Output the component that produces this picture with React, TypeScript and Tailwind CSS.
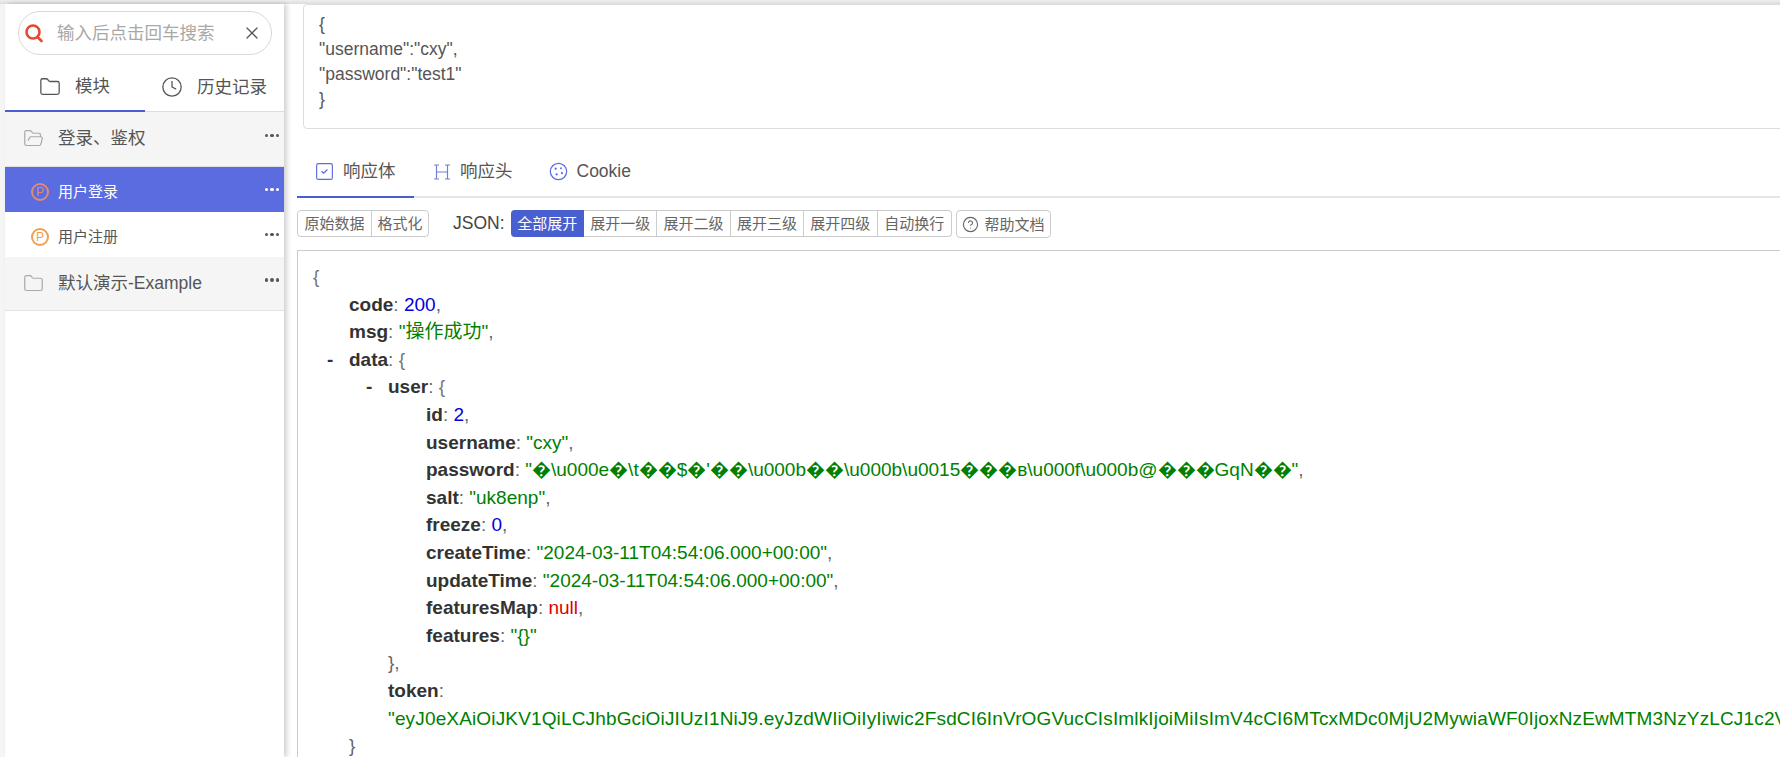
import { ReactNode } from "react";
import { CircleHelp, Clock, Folder, FolderOpen, SquareCheck, X } from "lucide-react";

const FONT = "font-['Liberation_Sans','Noto_Sans_CJK_SC',sans-serif]";

const EXPAND = ["全部展开", "展开一级", "展开二级", "展开三级", "展开四级", "自动换行"];

const TOKEN =
  '"eyJ0eXAiOiJKV1QiLCJhbGciOiJIUzI1NiJ9.eyJzdWIiOiIyIiwic2FsdCI6InVrOGVucCIsImlkIjoiMiIsImV4cCI6MTcxMDc0MjU2MywiaWF0IjoxNzEwMTM3NzYzLCJ1c2V';

function Dots({ light, up }: { light?: boolean; up?: boolean }) {
  return (
    <div className={`flex gap-[2px] mr-[5px] ${up ? "mb-[7px]" : ""}`}>
      {[0, 1, 2].map((i) => (
        <span
          key={i}
          className={`w-[3.5px] h-[3.5px] rounded-full ${light ? "bg-white" : "bg-[#555]"}`}
        />
      ))}
    </div>
  );
}

function PBadge({ dim }: { dim?: boolean }) {
  return (
    <span
      className={`w-[18px] h-[18px] rounded-full border-2 flex items-center justify-center text-[12px] leading-none ${
        dim ? "border-[#e08a70] text-[#e08a70]" : "border-[#f0a050] text-[#f0a050]"
      }`}
    >
      P
    </span>
  );
}

function Key({ children }: { children: ReactNode }) {
  return <span className="font-bold text-[#333]">{children}</span>;
}

function Str({ children }: { children: ReactNode }) {
  return <span className="text-[#008000]">{children}</span>;
}

function Num({ children }: { children: ReactNode }) {
  return <span className="text-[#0000e0]">{children}</span>;
}

function Dash() {
  return <span className="inline-block w-[22px] -ml-[22px] font-bold text-[#333]">-</span>;
}

function Punct({ children }: { children: ReactNode }) {
  return <span className="text-[#777]">{children}</span>;
}

function Sidebar() {
  return (
    <aside className="w-[279px] shrink-0 flex flex-col bg-white shadow-[3px_0_5px_rgba(0,0,0,0.18)] z-10">
      <div className="pt-[7px] pl-[13px] pr-[12px]">
        <div className="h-[44px] rounded-full border border-[#d9d9d9] flex items-center pl-[5px] pr-[9px]">
          <svg viewBox="0 0 20 20" className="w-[20px] h-[20px] shrink-0" fill="none" stroke="#e8492f" strokeWidth="2.6">
            <circle cx="9" cy="9" r="6.5" />
            <path d="M13.5 14l4 4" strokeLinecap="round" />
          </svg>
          <span className="ml-[13px] text-[17.5px] text-[#a8a8a8] whitespace-nowrap">输入后点击回车搜索</span>
          <X className="ml-auto text-[#555] shrink-0" size={20} strokeWidth={1.5} />
        </div>
      </div>
      <div className="h-[57px] flex border-b border-[#ddd] text-[17.5px] text-[#555]">
        <div className="w-[140px] -mb-px border-b-2 border-[#4a5fcf] flex items-center pt-[8px] pl-[34px] gap-[14px]">
          <Folder size={22} strokeWidth={1.4} />
          <span>模块</span>
        </div>
        <div className="flex items-center pt-[8px] pl-[16px] gap-[14px]">
          <Clock size={22} strokeWidth={1.4} />
          <span>历史记录</span>
        </div>
      </div>
      <div className="h-[55px] bg-[#f5f5f5] border-b border-[#e2e2e2] flex items-center justify-between pl-[18px] text-[17.5px] text-[#555]">
        <div className="flex items-center gap-[14px] mb-[2px]">
          <FolderOpen className="text-[#aaa]" size={21} strokeWidth={1.4} />
          <span>登录、鉴权</span>
        </div>
        <Dots up />
      </div>
      <div className="h-[45px] bg-[#5a6cdf] flex items-center justify-between pl-[26px] text-[15px] text-white">
        <div className="flex items-center gap-[9px] pt-[5px]">
          <PBadge dim />
          <span>用户登录</span>
        </div>
        <Dots light />
      </div>
      <div className="h-[45px] flex items-center justify-between pl-[26px] text-[15px] text-[#555]">
        <div className="flex items-center gap-[9px] pt-[5px]">
          <PBadge />
          <span>用户注册</span>
        </div>
        <Dots />
      </div>
      <div className="h-[54px] bg-[#f5f5f5] border-b border-[#e2e2e2] flex items-center justify-between pl-[18px] text-[17.5px] text-[#555]">
        <div className="flex items-center gap-[14px]">
          <Folder className="text-[#aaa]" size={21} strokeWidth={1.4} />
          <span>默认演示-Example</span>
        </div>
        <Dots up />
      </div>
    </aside>
  );
}

function Tabs() {
  return (
    <div className="mt-[18px] h-[51px] border-b-2 border-[#e6e6e6] flex text-[17.5px] text-[#555]">
      <div className="w-[117px] h-[51px] border-b-2 border-[#4a5fcf] flex items-center pl-[17px] gap-[8px]">
        <SquareCheck className="text-[#5a6cdf]" size={21} strokeWidth={1.3} />
        <span>响应体</span>
      </div>
      <div className="flex items-center pl-[19px] gap-[9px] h-[49px]">
        <svg viewBox="0 0 18 18" className="w-[18px] h-[18px]" fill="none" stroke="#6f80d8" strokeWidth="1.2">
          <path d="M1 2h5M3.5 2v14M1 16h5M12 2h5M14.5 2v14M12 16h5M3.5 9h11" />
        </svg>
        <span>响应头</span>
      </div>
      <div className="flex items-center pl-[36px] gap-[9px] h-[49px]">
        <svg viewBox="0 0 20 20" className="w-[19px] h-[19px]" fill="none" stroke="#5a6cdf" strokeWidth="1.3">
          <circle cx="10" cy="10" r="8.6" />
          <circle cx="7" cy="7" r="1.2" fill="#5a6cdf" stroke="none" />
          <circle cx="12.6" cy="6.6" r="1" fill="#5a6cdf" stroke="none" />
          <circle cx="13.6" cy="11.6" r="1.2" fill="#5a6cdf" stroke="none" />
          <circle cx="8" cy="13" r="1.2" fill="#5a6cdf" stroke="none" />
        </svg>
        <span>Cookie</span>
      </div>
    </div>
  );
}

function Toolbar() {
  return (
    <div className="mt-[12px] h-[28px] flex items-start text-[15px] text-[#666]">
      <div className="h-[27px] flex border border-[#ccc] rounded-[4px]">
        <span className="w-[74px] flex items-center justify-center pt-[2px] border-r border-[#ccc]">原始数据</span>
        <span className="w-[56px] flex items-center justify-center pt-[2px]">格式化</span>
      </div>
      <span className="ml-[24px] h-[27px] flex items-center text-[17.5px] text-[#444]">JSON:</span>
      <div className="ml-[6px] h-[27px] flex border border-[#ccc] border-l-0 rounded-[4px]">
        {EXPAND.map((label, i) => (
          <span
            key={label}
            className={`w-[73.4px] flex items-center justify-center pt-[2px] ${
              i === 0
                ? "-my-px bg-[#4a5fcf] text-white rounded-l-[4px]"
                : i < EXPAND.length - 1
                  ? "border-r border-[#ccc]"
                  : ""
            }`}
          >
            {label}
          </span>
        ))}
      </div>
      <div className="ml-[4px] w-[95px] h-[28px] border border-[#ccc] rounded-[4px] flex items-center justify-center gap-[5px]">
        <CircleHelp size={17} strokeWidth={1.6} />
        <span className="pt-[2px]">帮助文档</span>
      </div>
    </div>
  );
}

function JsonView() {
  return (
    <div className="mt-[12px] flex-1 border-t border-l border-[#ccc] pt-[12px] pl-[15px] text-[19px] leading-[27.6px] text-[#666] whitespace-nowrap">
      <div className="text-[#777]">{"{"}</div>
      <div className="pl-[36px]">
        <Key>code</Key>: <Num>200</Num>,
      </div>
      <div className="pl-[36px]">
        <Key>msg</Key>: <Str>"操作成功"</Str>,
      </div>
      <div className="pl-[36px]">
        <Dash />
        <Key>data</Key>: <Punct>{"{"}</Punct>
      </div>
      <div className="pl-[75px]">
        <Dash />
        <Key>user</Key>: <Punct>{"{"}</Punct>
      </div>
      <div className="pl-[113px]">
        <Key>id</Key>: <Num>2</Num>,
      </div>
      <div className="pl-[113px]">
        <Key>username</Key>: <Str>"cxy"</Str>,
      </div>
      <div className="pl-[113px]">
        <Key>password</Key>: <Str>"�\u000e�\t��$�'��\u000b��\u000b\u0015���в\u000f\u000b@���GqN��"</Str>,
      </div>
      <div className="pl-[113px]">
        <Key>salt</Key>: <Str>"uk8enp"</Str>,
      </div>
      <div className="pl-[113px]">
        <Key>freeze</Key>: <Num>0</Num>,
      </div>
      <div className="pl-[113px]">
        <Key>createTime</Key>: <Str>"2024-03-11T04:54:06.000+00:00"</Str>,
      </div>
      <div className="pl-[113px]">
        <Key>updateTime</Key>: <Str>"2024-03-11T04:54:06.000+00:00"</Str>,
      </div>
      <div className="pl-[113px]">
        <Key>featuresMap</Key>: <span className="text-[#e00000]">null</span>,
      </div>
      <div className="pl-[113px]">
        <Key>features</Key>: <Str>"{"{}"}"</Str>
      </div>
      <div className="pl-[75px]">{"},"}</div>
      <div className="pl-[75px]">
        <Key>token</Key>:
      </div>
      <div className="pl-[75px] tracking-[0.15px]">
        <Str>{TOKEN}</Str>
      </div>
      <div className="pl-[36px]">{"}"}</div>
    </div>
  );
}

export default function App() {
  return (
    <div className={`${FONT} w-[1780px] h-[757px] overflow-hidden bg-white flex flex-col`}>
      <div className="h-[4px] shrink-0 bg-gradient-to-b from-[#efefef] to-[#dcdcdc]" />
      <div className="flex-1 flex min-h-0">
        <div className="w-[5px] shrink-0 bg-[#f5f5f5]" />
        <Sidebar />
        <main className="flex-1 min-w-0 overflow-hidden flex flex-col pl-[13px]">
          <div className="ml-[6px] -mr-[20px] h-[125px] shrink-0 border border-[#ddd] rounded-[4px] pt-[7px] pl-[15px] text-[17.5px] leading-[25px] text-[#555]">
            <div>{"{"}</div>
            <div>"username":"cxy",</div>
            <div>"password":"test1"</div>
            <div>{"}"}</div>
          </div>
          <Tabs />
          <Toolbar />
          <JsonView />
        </main>
      </div>
    </div>
  );
}
